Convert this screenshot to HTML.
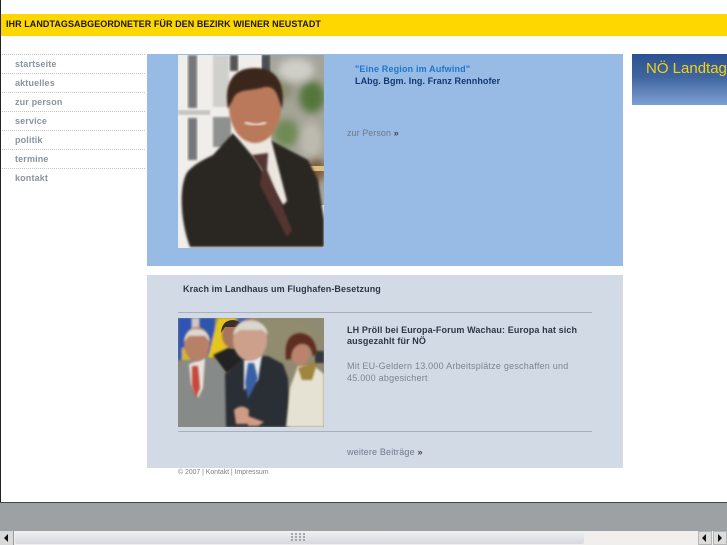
<!DOCTYPE html>
<html><head><meta charset="utf-8"><style>
html,body{margin:0;padding:0;background:#fff;width:727px;height:545px;overflow:hidden}
body{position:relative;font-family:"Liberation Sans",Arial,sans-serif}
.a{position:absolute;white-space:nowrap}
.nav{position:absolute;left:2px;width:143px;height:0;border-top:1px dotted #c4c4c4}
.n{position:absolute;left:15px;font-size:9px;font-weight:bold;letter-spacing:.15px;color:#8b93a0;line-height:12px}
svg{position:absolute;display:block}
</style></head><body>
<div class="a" style="left:0;top:0;width:1px;height:503px;background:#222"></div>
<div class="a" style="left:1px;top:14px;width:726px;height:22px;background:#ffd700"></div>
<div class="a" style="left:6px;top:18px;font-size:9px;line-height:12px;font-weight:bold;letter-spacing:.06px;color:#1a1a10">IHR LANDTAGSABGEORDNETER FÜR DEN BEZIRK WIENER NEUSTADT</div>

<div class="nav" style="top:54px"></div><div class="n" style="top:58px">startseite</div>
<div class="nav" style="top:73px"></div><div class="n" style="top:77px">aktuelles</div>
<div class="nav" style="top:92px"></div><div class="n" style="top:96px">zur person</div>
<div class="nav" style="top:111px"></div><div class="n" style="top:115px">service</div>
<div class="nav" style="top:130px"></div><div class="n" style="top:134px">politik</div>
<div class="nav" style="top:149px"></div><div class="n" style="top:153px">termine</div>
<div class="nav" style="top:168px"></div><div class="n" style="top:172px">kontakt</div>

<div class="a" style="left:147px;top:54px;width:476px;height:212px;background:#97bbe5"></div>
<svg style="left:178px;top:55px" width="146" height="193" viewBox="0 0 146 193">
<defs><filter id="b1"><feGaussianBlur stdDeviation="1"/></filter><filter id="b2"><feGaussianBlur stdDeviation="4"/></filter></defs>
<rect width="146" height="193" fill="#f0eeea"/>
<rect x="10" width="9" height="53" fill="#77777a" filter="url(#b1)"/><rect x="10" y="63" width="9" height="42" fill="#77777a" filter="url(#b1)"/>
<rect x="0" y="55" width="32" height="5" fill="#c4c4c0" filter="url(#b1)"/>
<rect x="35" y="0" width="16" height="52" fill="#cfcfcb" filter="url(#b1)"/><rect x="35" y="62" width="18" height="30" fill="#8f918e" filter="url(#b1)"/>
<rect x="52" width="8" height="16" fill="#555" filter="url(#b1)"/>
<rect x="84" width="62" height="150" fill="#a5a498"/>
<rect x="84" width="8" height="18" fill="#4a4f52" filter="url(#b1)"/>
<g filter="url(#b2)"><ellipse cx="134" cy="42" rx="13" ry="16" fill="#55763a"/><ellipse cx="108" cy="78" rx="13" ry="14" fill="#6f8a55"/><ellipse cx="133" cy="85" rx="11" ry="18" fill="#bdbbb0"/><ellipse cx="138" cy="115" rx="10" ry="12" fill="#7c5a3b"/><ellipse cx="118" cy="15" rx="18" ry="12" fill="#cfcfc8"/><ellipse cx="105" cy="35" rx="10" ry="10" fill="#8d8d72"/></g>
<rect x="130" y="111" width="16" height="5" fill="#d8c184"/>
<path d="M12 192C2 165 2 135 7 122C10 112 25 105 35 100L55 78L75 92L92 85L130 105L140 125L146 165V192Z" fill="#2a2522" filter="url(#b1)"/>
<path d="M55 78L64 70L92 78L94 88L109 146L105 150L78 105Z" fill="#ece6e0" filter="url(#b1)"/>
<path d="M74 100L90 98L89 115L114 175L109 182L82 130L84 115Z" fill="#553530" filter="url(#b1)"/>
<ellipse cx="77" cy="52" rx="26" ry="36" fill="#b9795a" filter="url(#b1)"/>
<path d="M50 54C45 25 58 12 78 13C98 13 108 28 104 54L100 42C97 33 92 30 83 33C70 36 59 34 55 44Z" fill="#3b251a" filter="url(#b1)"/>
<path d="M62 42h12M82 42h12" stroke="#4a2d20" stroke-width="2" filter="url(#b1)"/>
<path d="M67 67q11 6 21 0" stroke="#e4d0c4" stroke-width="3" fill="none" filter="url(#b1)"/>
</svg>
<div class="a" style="left:355px;top:63px;font-size:9px;line-height:12px;font-weight:bold;letter-spacing:.17px;color:#1d78c8">"Eine Region im Aufwind"</div>
<div class="a" style="left:355px;top:75px;font-size:9px;line-height:12px;font-weight:bold;letter-spacing:.07px;color:#13386f">LAbg. Bgm. Ing. Franz Rennhofer</div>
<div class="a" style="left:347px;top:127px;font-size:9px;line-height:12px;letter-spacing:.05px;color:#6e7a8a">zur Person <b style="color:#444">»</b></div>

<div class="a" style="left:147px;top:275px;width:476px;height:193px;background:#d2dae6"></div>
<div class="a" style="left:183px;top:283px;font-size:9px;line-height:12px;font-weight:bold;letter-spacing:.11px;color:#2d3845">Krach im Landhaus um Flughafen-Besetzung</div>
<div class="a" style="left:178px;top:312px;width:414px;height:1px;background:#a8b1bb"></div>
<svg style="left:178px;top:318px" width="146" height="109" viewBox="0 0 146 109">
<defs><filter id="b3"><feGaussianBlur stdDeviation="1"/></filter><filter id="b4"><feGaussianBlur stdDeviation="3"/></filter></defs>
<rect width="146" height="109" fill="#8f8a72"/>
<g filter="url(#b3)"><rect width="14" height="42" fill="#2e55b5"/><rect x="14" width="7" height="12" fill="#cfc9c5"/><rect x="21" width="16" height="36" fill="#2f55ad"/>
<path d="M30 40L40 0H58L48 38Z" fill="#e5c61b"/><rect x="60" width="12" height="15" fill="#3a62b5"/><rect x="4" y="30" width="9" height="12" fill="#d5b72a"/></g>
<ellipse cx="105" cy="22" rx="35" ry="24" fill="#918b70" filter="url(#b4)"/>
<path d="M35 37L50 30L68 32L62 50L48 55Z" fill="#202024" filter="url(#b3)"/>
<ellipse cx="54" cy="17" rx="10" ry="13" fill="#a8755b" filter="url(#b3)"/><path d="M43 15q1-13 12-13q10 1 11 12l-5-5h-14z" fill="#3a3028"/>
<path d="M0 48L22 38L38 42L50 58L52 109H0Z" fill="#868a88" filter="url(#b3)"/>
<path d="M11 46L27 40L25 70L20 80L13 66Z" fill="#e8e2dc" filter="url(#b3)"/><path d="M14 48h6l2 22-4 10-4-12Z" fill="#c5483b" filter="url(#b3)"/>
<ellipse cx="19" cy="26" rx="13" ry="17" fill="#b98067" filter="url(#b3)"/><path d="M6 24q2-14 13-13q11 0 13 13l-5-6h-16z" fill="#dcd8d4" filter="url(#b3)"/>
<path d="M47 56L60 44L68 38L90 38L105 46L110 60L112 109H48Z" fill="#292d35" filter="url(#b3)"/>
<path d="M66 42L84 37L80 62L66 72Z" fill="#e8ecef" filter="url(#b3)"/><path d="M70 45h6l4 16-10 20-3-16Z" fill="#3a5ea6" filter="url(#b3)"/>
<ellipse cx="72" cy="22" rx="17" ry="21" fill="#cda08c" filter="url(#b3)"/><path d="M55 17q3-14 17-14q16 0 18 14l-6-5h-22z" fill="#d9d7cf" filter="url(#b3)"/>
<path d="M56 92q8-7 15 0l-1 14h-12zM70 98l16 6l-6 4h-10z" fill="#cf9b84" filter="url(#b3)"/>
<path d="M108 109L112 70L120 48L136 48L146 56V109Z" fill="#e6e2d3" filter="url(#b3)"/>
<path d="M120 50L140 42L134 62L124 62Z" fill="#a08440" filter="url(#b3)"/>
<rect x="137" y="33" width="9" height="12" fill="#33383c" filter="url(#b3)"/>
<ellipse cx="122" cy="34" rx="10" ry="13" fill="#b9836d" filter="url(#b3)"/><path d="M108 42q-3-26 14-27q15 1 17 20l-4 4q-2-15-13-13q-9 3-9 15z" fill="#5f2f22" filter="url(#b3)"/>
</svg>
<div class="a" style="left:347px;top:325px;font-size:9px;line-height:11px;font-weight:bold;letter-spacing:.12px;color:#2d3845">LH Pröll bei Europa-Forum Wachau: Europa hat sich<br>ausgezahlt für NÖ</div>
<div class="a" style="left:347px;top:360px;font-size:9px;line-height:12px;letter-spacing:.23px;color:#7c8590">Mit EU-Geldern 13.000 Arbeitsplätze geschaffen und<br>45.000 abgesichert</div>
<div class="a" style="left:178px;top:431px;width:414px;height:1px;background:#a8b1bb"></div>
<div class="a" style="left:347px;top:446px;font-size:9px;line-height:12px;letter-spacing:.17px;color:#6e7a8a">weitere Beiträge <b style="color:#444">»</b></div>
<div class="a" style="left:178px;top:467px;font-size:7px;line-height:11px;letter-spacing:-.07px;color:#7e8388">© 2007 | Kontakt | Impressum</div>

<div class="a" style="left:632px;top:54px;width:95px;height:51px;background:linear-gradient(#2b5193,#3f659f 45%,#7f9fd3)"></div>
<div class="a" style="left:646px;top:60px;font-size:15px;line-height:17px;color:#f4d313">NÖ Landtag</div>

<div class="a" style="left:0;top:502px;width:727px;height:1px;background:#444"></div>
<div class="a" style="left:0;top:503px;width:727px;height:28px;background:#9da1a3"></div>
<div class="a" style="left:0;top:531px;width:727px;height:14px;background:#f1efee"></div>
<div class="a" style="left:15px;top:531px;width:569px;height:13px;background:linear-gradient(#eff0f2,#d6d9dd);border-radius:2px"></div>
<div class="a" style="left:0;top:531px;width:14px;height:14px;background:#d9d9d9;border-right:1px solid #999;box-sizing:border-box"></div>
<div class="a" style="left:698px;top:531px;width:14px;height:14px;background:#dcdcdc;box-sizing:border-box;border:1px solid #b5b5b5"></div>
<div class="a" style="left:713px;top:531px;width:14px;height:14px;background:#dcdcdc;box-sizing:border-box;border:1px solid #b5b5b5"></div>
<svg style="left:0;top:531px" width="727" height="14"><path d="M4 7l4-4v8zM702 7l4-4v8zM722 7l-4-4v8z" fill="#111"/>
<g fill="#a5a7aa"><rect x="291" y="2" width="2" height="2"/><rect x="295" y="2" width="2" height="2"/><rect x="299" y="2" width="2" height="2"/><rect x="303" y="2" width="2" height="2"/><rect x="291" y="5" width="2" height="2"/><rect x="295" y="5" width="2" height="2"/><rect x="299" y="5" width="2" height="2"/><rect x="303" y="5" width="2" height="2"/><rect x="291" y="8" width="2" height="2"/><rect x="295" y="8" width="2" height="2"/><rect x="299" y="8" width="2" height="2"/><rect x="303" y="8" width="2" height="2"/></g>
</svg>
</body></html>
